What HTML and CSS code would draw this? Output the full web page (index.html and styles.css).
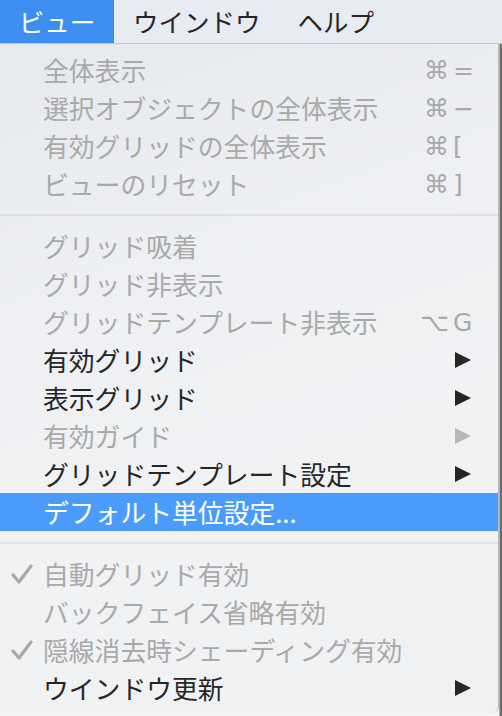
FILE: index.html
```html
<!DOCTYPE html>
<html lang="ja">
<head>
    <meta charset="UTF-8">
    <meta name="viewport" content="width=device-width, initial-scale=1.0">
    <title>ビュー メニュー</title>
    <link rel="stylesheet" href="styles.css">
</head>
<body>
    <div class="menubar">
        <div class="menubar-item active">ビュー</div>
        <div class="menubar-item">ウインドウ</div>
        <div class="menubar-item">ヘルプ</div>
    </div>

    <div class="menu">
        <div class="item disabled">
            <span class="check"></span>
            <span class="label">全体表示</span>
            <span class="keys"><span class="mod">⌘</span><span class="key">=</span></span>
        </div>
        <div class="item disabled">
            <span class="check"></span>
            <span class="label">選択オブジェクトの全体表示</span>
            <span class="keys"><span class="mod">⌘</span><span class="key">−</span></span>
        </div>
        <div class="item disabled">
            <span class="check"></span>
            <span class="label">有効グリッドの全体表示</span>
            <span class="keys"><span class="mod">⌘</span><span class="key">[</span></span>
        </div>
        <div class="item disabled">
            <span class="check"></span>
            <span class="label">ビューのリセット</span>
            <span class="keys"><span class="mod">⌘</span><span class="key">]</span></span>
        </div>

        <div class="separator"></div>

        <div class="item disabled">
            <span class="check"></span>
            <span class="label">グリッド吸着</span>
        </div>
        <div class="item disabled">
            <span class="check"></span>
            <span class="label">グリッド非表示</span>
        </div>
        <div class="item disabled">
            <span class="check"></span>
            <span class="label">グリッドテンプレート非表示</span>
            <span class="keys"><span class="mod">⌥</span><span class="key">G</span></span>
        </div>
        <div class="item">
            <span class="check"></span>
            <span class="label">有効グリッド</span>
            <svg class="arrow" width="18" height="18" viewBox="0 0 18 18"><polygon points="1,1 17,9 1,17"/></svg>
        </div>
        <div class="item">
            <span class="check"></span>
            <span class="label">表示グリッド</span>
            <svg class="arrow" width="18" height="18" viewBox="0 0 18 18"><polygon points="1,1 17,9 1,17"/></svg>
        </div>
        <div class="item disabled">
            <span class="check"></span>
            <span class="label">有効ガイド</span>
            <svg class="arrow" width="18" height="18" viewBox="0 0 18 18"><polygon points="1,1 17,9 1,17"/></svg>
        </div>
        <div class="item">
            <span class="check"></span>
            <span class="label">グリッドテンプレート設定</span>
            <svg class="arrow" width="18" height="18" viewBox="0 0 18 18"><polygon points="1,1 17,9 1,17"/></svg>
        </div>
        <div class="item selected">
            <span class="check"></span>
            <span class="label">デフォルト単位設定...</span>
        </div>

        <div class="separator"></div>

        <div class="item disabled">
            <span class="check"><svg width="22" height="22" viewBox="0 0 22 22"><path d="M2 12 L8 19 L20 3"/></svg></span>
            <span class="label">自動グリッド有効</span>
        </div>
        <div class="item disabled">
            <span class="check"></span>
            <span class="label">バックフェイス省略有効</span>
        </div>
        <div class="item disabled">
            <span class="check"><svg width="22" height="22" viewBox="0 0 22 22"><path d="M2 12 L8 19 L20 3"/></svg></span>
            <span class="label">隠線消去時シェーディング有効</span>
        </div>
        <div class="item">
            <span class="check"></span>
            <span class="label">ウインドウ更新</span>
            <svg class="arrow" width="18" height="18" viewBox="0 0 18 18"><polygon points="1,1 17,9 1,17"/></svg>
        </div>
    </div>
</body>
</html>
```

FILE: styles.css
```css
body {
    margin: 0;
    width: 502px;
    height: 716px;
    overflow: hidden;
    font-family: "Noto Sans CJK JP", "Noto Sans", sans-serif;
    background: linear-gradient(to right, #f4f4f4 0, #f4f4f4 499px, #6c6c6c 500px);
}

.menubar {
    display: flex;
    height: 43px;
    background-color: #e7ecf2;
    border-bottom: 1px solid #c3c6ca;
}

.menubar-item {
    display: flex;
    align-items: center;
    padding: 0 19px 2px 19px;
    font-size: 25.5px;
    white-space: nowrap;
    color: #262626;
}

.menubar-item.active {
    width: 114px;
    box-sizing: border-box;
    justify-content: center;
    padding: 0 0 2px 0;
    background-color: #3d8ef0;
    color: #fff;
}

.menubar-item:nth-child(3) {
    padding-left: 18px;
}

.menu {
    width: 499px;
    height: 669px;
    padding-top: 7px;
    box-sizing: border-box;
    background: linear-gradient(160deg, #e6e9ed 0%, #eef0f3 35%, #f1f2f4 60%, #f0f1f3 100%);
    border-right: 1px solid #b9bbbe;
    border-radius: 0 0 7px 7px;
}

.item {
    display: flex;
    align-items: center;
    height: 38px;
    padding-right: 25px;
    font-size: 25.8px;
    color: #262626;
}

.item.disabled {
    color: #a9a9a9;
}

.item.selected {
    background-color: #4a9bfa;
    color: #fff;
}

.check {
    display: flex;
    align-items: center;
    justify-content: center;
    width: 43px;
    height: 38px;
    padding-left: 1px;
    box-sizing: border-box;
}

.check path {
    fill: none;
    stroke: #a9a9a9;
    stroke-width: 3.2;
    stroke-linecap: round;
    stroke-linejoin: round;
}

.label {
    flex: 1;
    white-space: nowrap;
    padding-bottom: 2px;
}

.keys {
    display: flex;
    font-family: "DejaVu Sans", sans-serif;
    font-size: 25px;
    color: #a9a9a9;
}

.mod {
    width: 30px;
    text-align: right;
}

.key {
    width: 24px;
    padding-left: 4px;
    box-sizing: border-box;
    text-align: left;
}

.arrow {
    margin-right: 1px;
    fill: #262626;
}

.item.disabled .arrow {
    fill: #b8b8b8;
}

.separator {
    height: 2px;
    margin: 11px 0;
    background-color: #dfe0e2;
}
```
